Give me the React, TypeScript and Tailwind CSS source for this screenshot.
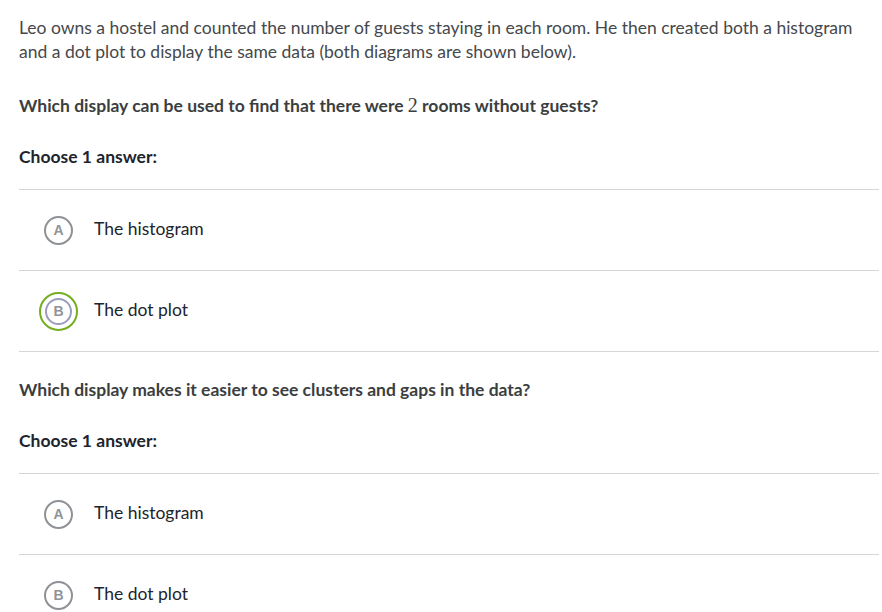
import type { ReactElement } from "react";

type Choice = { letter: string; label: string; selected?: boolean };

const letterCls =
	"flex items-center justify-center rounded-full border-2 text-[14px] font-bold text-[#909398] font-['Liberation_Sans',sans-serif]";

function ChoiceRow({ letter, label, selected }: Choice): ReactElement {
	return (
		<div className="flex h-[81px] items-center border-b border-[#d6d6d6]">
			<div className="flex w-[75px] justify-center pl-[4px]">
				{selected ? (
					<div className="flex h-[39px] w-[39px] items-center justify-center rounded-full border-2 border-[#74ad1f]">
						<div className={`h-[27px] w-[27px] border-[#9a9dbb] ${letterCls}`}>{letter}</div>
					</div>
				) : (
					<div className={`h-[29px] w-[29px] border-[#8e9196] ${letterCls}`}>{letter}</div>
				)}
			</div>
			<span className="-mt-[2px] text-[17.5px] text-[#21242c]">{label}</span>
		</div>
	);
}

function Question({
	prompt,
	choices,
}: {
	prompt: ReactElement | string;
	choices: Choice[];
}): ReactElement {
	return (
		<div>
			<p className="text-[17.5px] font-bold leading-6 text-[#3b3e40]">{prompt}</p>
			<p className="mt-[27px] text-[17.5px] font-bold leading-6 text-[#21242c]">
				Choose 1 answer:
			</p>
			<div className="mt-[20px] border-t border-[#d6d6d6]">
				{choices.map((c) => (
					<ChoiceRow key={c.letter} {...c} />
				))}
			</div>
		</div>
	);
}

export default function App(): ReactElement {
	return (
		<div
			className="min-h-screen bg-white pl-[19px] pr-[3px] pt-[16px]"
			style={{ fontFamily: "Lato, 'Noto Sans', sans-serif" }}
		>
			<p className="text-[17.5px] leading-6 text-[#45484c]">
				Leo owns a hostel and counted the number of guests staying in each room. He
				then created both a histogram and a dot plot to display the same data (both
				diagrams are shown below).
			</p>
			<div className="mt-[29px]">
				<Question
					prompt={
						<>
							Which display can be used to find that there were{" "}
							<span className="font-normal text-[20px] font-['Liberation_Serif',serif]">
								2
							</span>{" "}
							rooms without guests?
						</>
					}
					choices={[
						{ letter: "A", label: "The histogram" },
						{ letter: "B", label: "The dot plot", selected: true },
					]}
				/>
			</div>
			<div className="mt-[26px]">
				<Question
					prompt="Which display makes it easier to see clusters and gaps in the data?"
					choices={[
						{ letter: "A", label: "The histogram" },
						{ letter: "B", label: "The dot plot" },
					]}
				/>
			</div>
		</div>
	);
}
